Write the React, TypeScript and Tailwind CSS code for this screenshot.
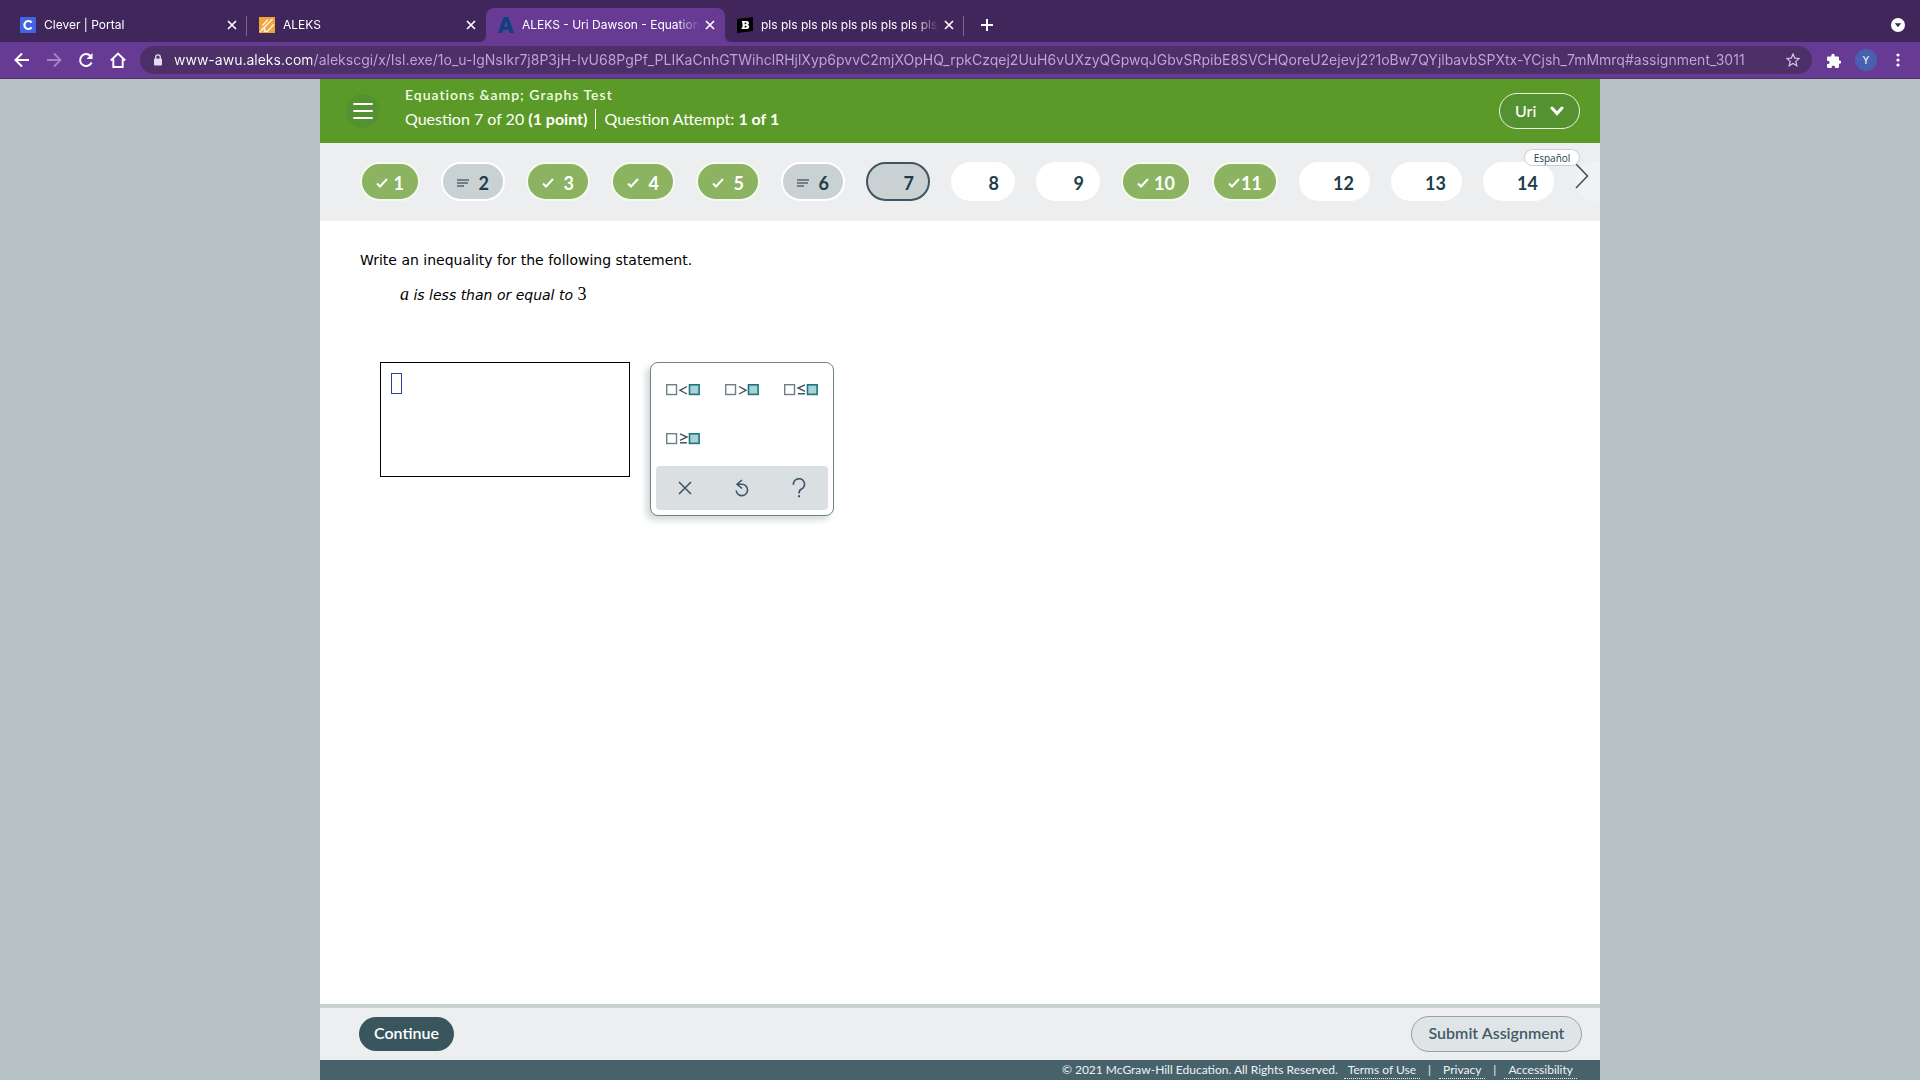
import React, { useState } from 'react';
import { clsx } from 'clsx';

type Status = 'answered' | 'partial' | 'current' | 'blank';

const questions: { n: number; status: Status; width: string }[] = [
  { n: 1, status: 'answered', width: 'w-[60px]' },
  { n: 2, status: 'partial', width: 'w-16' },
  { n: 3, status: 'answered', width: 'w-16' },
  { n: 4, status: 'answered', width: 'w-16' },
  { n: 5, status: 'answered', width: 'w-16' },
  { n: 6, status: 'partial', width: 'w-16' },
  { n: 7, status: 'current', width: 'w-16' },
  { n: 8, status: 'blank', width: 'w-16' },
  { n: 9, status: 'blank', width: 'w-16' },
  { n: 10, status: 'answered', width: 'w-[70px]' },
  { n: 11, status: 'answered', width: 'w-[66px]' },
  { n: 12, status: 'blank', width: 'w-[71px]' },
  { n: 13, status: 'blank', width: 'w-[71px]' },
  { n: 14, status: 'blank', width: 'w-[71px]' },
];

const host = 'www-awu.aleks.com';
const path =
  '/alekscgi/x/Isl.exe/1o_u-IgNsIkr7j8P3jH-lvU68PgPf_PLIKaCnhGTWihclRHjlXyp6pvvC2mjXOpHQ_rpkCzqej2UuH6vUXzyQGpwqJGbvSRpibE8SVCHQoreU2ejevj2?1oBw7QYjlbavbSPXtx-YCjsh_7mMmrq#assignment_3011';

function CloseIcon() {
  return (
    <svg width="10" height="10" viewBox="0 0 10 10" fill="none" stroke="#fff" strokeWidth="1.7">
      <path d="M1 1l8 8M9 1l-8 8" />
    </svg>
  );
}

function CleverIcon() {
  return (
    <svg width="16" height="16" viewBox="0 0 16 16">
      <rect width="16" height="16" rx="1" fill="#4264e3" />
      <path d="M11.6 5.6A4 4 0 1 0 11.6 10.4" fill="none" stroke="#fff" strokeWidth="2.2" />
    </svg>
  );
}

function PencilsIcon() {
  return (
    <svg width="16" height="16" viewBox="0 0 16 16">
      <rect width="16" height="16" fill="#f0a33c" />
      <path d="M1 15L13.500 2M3.500 8.500L9 2.500M2.500 11.500h3.200l-.2 2.800h3l6.500-7" fill="none" stroke="#fff3dc" strokeWidth="1.4" />
    </svg>
  );
}

function AleksIcon() {
  return (
    <svg width="16" height="16" viewBox="0 0 16 16">
      <path d="M0 16L5.700 0h4.600L16 16h-4.200l-1-3.200H5.200L4.200 16zM6.200 9.700h3.600L8 4z" fill="#0e417c" fillRule="evenodd" />
    </svg>
  );
}

function BrainlyIcon() {
  return (
    <svg width="16" height="16" viewBox="0 0 16 16">
      <path d="M0 2L16 0v14L0 16z" fill="#000" />
      <path d="M5 4h4.500c3 0 3 3.200 1.200 3.700 2.300.6 2 4.300-1.200 4.300H4.600v-1.600h.9V5.600H5zM7.700 5.600v1.600h1c1 0 1-1.600 0-1.600zM7.700 8.700v1.700h1.100c1.100 0 1.100-1.700 0-1.700z" fill="#fff" fillRule="evenodd" />
    </svg>
  );
}

const tabs = [
  { title: 'Clever | Portal', icon: CleverIcon, active: false, divider: true },
  { title: 'ALEKS', icon: PencilsIcon, active: false, divider: false },
  { title: 'ALEKS - Uri Dawson - Equation', icon: AleksIcon, active: true, divider: false },
  { title: 'pls pls pls pls pls pls pls pls pls', icon: BrainlyIcon, active: false, divider: true },
];

function TabStrip() {
  return (
    <div className="flex h-[42px] items-end bg-[#41265b] pl-2 pr-[15px]">
      {tabs.map((tab) => {
        const Icon = tab.icon;
        return (
          <div
            key={tab.title}
            className={clsx(
              'relative flex h-[34px] w-[239px] items-center rounded-t-lg pl-3 pr-[10px]',
              tab.active && 'bg-[#673a94]'
            )}
          >
            {tab.active && (
              <>
                <svg className="absolute -left-1.5 bottom-0" width="6" height="6" viewBox="0 0 6 6" fill="#673a94">
                  <path d="M6 0v6H0a6 6 0 0 0 6-6z" />
                </svg>
                <svg className="absolute -right-1.5 bottom-0" width="6" height="6" viewBox="0 0 6 6" fill="#673a94">
                  <path d="M0 0v6h6a6 6 0 0 1-6-6z" />
                </svg>
              </>
            )}
            <Icon />
            <span className="ml-2 flex-1 overflow-hidden whitespace-nowrap text-xs text-white [mask-image:linear-gradient(to_right,#000_154px,transparent_178px)]">
              {tab.title}
            </span>
            <button aria-label={`Close ${tab.title}`} className="ml-1.5">
              <CloseIcon />
            </button>
            {tab.divider && <span className="absolute right-0 top-2 h-5 w-px bg-[#7a6590]" />}
          </div>
        );
      })}
      <button aria-label="New tab" className="flex h-[34px] w-[46px] items-center justify-center">
        <svg width="12" height="12" viewBox="0 0 12 12" stroke="#fff" strokeWidth="2">
          <path d="M6 0v12M0 6h12" />
        </svg>
      </button>
      <button aria-label="Search tabs" className="ml-auto flex h-[34px] items-center">
        <svg width="14" height="14" viewBox="0 0 14 14">
          <circle cx="7" cy="7" r="7" fill="#fff" />
          <path d="M3.800 5.200h6.400L7 9.300z" fill="#41265b" />
        </svg>
      </button>
    </div>
  );
}

function Toolbar() {
  return (
    <div className="flex h-[37px] items-center border-b border-[#4c3566] bg-[#673a94] pl-[14px] pr-5">
      <div className="flex gap-4">
        <button aria-label="Back">
          <svg width="16" height="16" viewBox="0 0 16 16" fill="none" stroke="#fff" strokeWidth="2">
            <path d="M15 8H2M8 1.500L1.500 8 8 14.500" />
          </svg>
        </button>
        <button aria-label="Forward">
          <svg width="16" height="16" viewBox="0 0 16 16" fill="none" stroke="#a983c9" strokeWidth="1.800">
            <path d="M1 8h13M8 1.500L14.500 8 8 14.500" />
          </svg>
        </button>
        <button aria-label="Reload">
          <svg width="16" height="16" viewBox="0 0 16 16" fill="none" stroke="#fff" strokeWidth="2">
            <path d="M13.600 10.500A6 6 0 1 1 12.500 4" />
            <path d="M14.500 1v6h-6z" fill="#fff" stroke="none" />
          </svg>
        </button>
        <button aria-label="Home">
          <svg width="16" height="16" viewBox="0 0 16 16" fill="none" stroke="#fff" strokeWidth="1.900">
            <path d="M.8 8.500L8 1.500l7.200 7M3.300 7v8h9.400V7" />
          </svg>
        </button>
      </div>
      <div className="ml-[14px] flex h-7 flex-1 items-center rounded-full bg-[#4e3068] pl-[14px] pr-3">
        <svg width="8" height="12" viewBox="0 0 8 12">
          <rect y="4.500" width="8" height="7" rx="1" fill="#e6dcee" />
          <path d="M1.700 5V3.200a2.300 2.300 0 0 1 4.600 0V5" fill="none" stroke="#e6dcee" strokeWidth="1.300" />
        </svg>
        <input
          aria-label="Address"
          defaultValue={host + path}
          className="ml-3 h-[26px] min-w-0 flex-1 bg-[linear-gradient(to_right,#fff_138px,#c0a8d6_138px)] bg-clip-text pb-0.5 text-sm text-transparent outline-none"
        />
        <button aria-label="Bookmark">
          <svg width="14" height="14" viewBox="0 0 14 14" fill="none" stroke="#d5c6e2" strokeWidth="1.200">
            <path d="M7 1l1.700 4.100 4.400.4-3.300 2.900 1 4.300L7 10.400l-3.800 2.300 1-4.300L.9 5.500l4.400-.4z" />
          </svg>
        </button>
      </div>
      <div className="flex items-center pl-[15px]">
        <button aria-label="Extensions">
          <svg width="14" height="15" viewBox="0 0 14 15" fill="#fff">
            <path d="M1.300 3.500h3V2.400a1.700 1.700 0 0 1 3.400 0v1.100h3.100c.7 0 1.200.5 1.200 1.200v2.700h.5a1.700 1.700 0 0 1 0 3.400H12v3c0 .7-.5 1.200-1.200 1.200H8v-.8a1.700 1.700 0 0 0-3.400 0v.8H1.300C.6 15 0 14.500 0 13.800v-2.700h.9a1.700 1.700 0 0 0 0-3.400H0v-3c0-.7.6-1.200 1.300-1.200z" />
          </svg>
        </button>
        <button className="ml-[14px] h-[22px] w-[22px] rounded-full bg-[#4a5fb0] text-[10px] text-white">Y</button>
        <button aria-label="Menu" className="ml-[19px]">
          <svg width="4" height="14" viewBox="0 0 4 14" fill="#fff">
            <circle cx="2" cy="2" r="1.600" />
            <circle cx="2" cy="7" r="1.600" />
            <circle cx="2" cy="12" r="1.600" />
          </svg>
        </button>
      </div>
    </div>
  );
}

function Header() {
  return (
    <header className="flex h-16 items-center bg-[#5b9a28] pl-[26px] pr-5 text-white">
      <button aria-label="Open menu" className="flex h-[34px] w-[34px] items-center justify-center rounded-full bg-[#549231]">
        <svg width="20" height="16" viewBox="0 0 20 16" stroke="#fff" strokeWidth="1.800" strokeLinecap="round">
          <path d="M1 1h18M1 8h18M1 15h18" />
        </svg>
      </button>
      <div className="ml-[25px] pb-2">
        <h1 className="text-sm font-semibold leading-6 tracking-[1px] text-[#f0fae6]">Equations &amp;amp; Graphs Test</h1>
        <div className="flex items-center text-base leading-6">
          <span>
            Question 7 of 20 <b>(1 point)</b>
          </span>
          <span className="mx-2 h-5 w-px bg-white" />
          <span>
            Question Attempt: <b>1 of 1</b>
          </span>
        </div>
      </div>
      <button className="ml-auto flex h-9 w-[81px] items-center justify-between rounded-full border border-[#eaf6dc] bg-[#549231] px-[15px] text-base font-medium">
        Uri
        <svg width="14" height="10" viewBox="0 0 14 10" fill="none" stroke="#fff" strokeWidth="3" strokeLinecap="round">
          <path d="M2 2l5 5.500L12 2" />
        </svg>
      </button>
    </header>
  );
}

function QuestionNav({ current, onSelect }: { current: number; onSelect: (n: number) => void }) {
  return (
    <nav className="relative flex h-[78px] items-start gap-[21px] overflow-hidden bg-[#eceef0] pl-10 pt-[19px]">
      {questions.map((q) => (
        <button
          key={q.n}
          onClick={() => onSelect(q.n)}
          className={clsx(
            'flex h-[39px] shrink-0 items-center rounded-full border-2 px-[14px] pt-0.5 text-lg font-bold',
            q.width,
            q.status === 'answered' && 'justify-between border-[#f4fbec] bg-[#8bb362] text-white',
            q.status === 'partial' && 'justify-between border-white bg-[#c9d1d2] text-[#223c4a]',
            q.status === 'current' && 'justify-end bg-[#c9d1d2] text-[#223c4a]',
            q.status === 'blank' && 'justify-end border-white bg-white text-[#1f3d46]',
            q.status !== 'answered' && q.n === current && 'border-[#42545f]'
          )}
        >
          {q.status === 'answered' && (
            <svg width="12" height="10" viewBox="0 0 12 10" fill="none" stroke="#fff" strokeWidth="2" className="shrink-0">
              <path d="M1 5.500L4 8.500 11 1" />
            </svg>
          )}
          {q.status === 'partial' && (
            <svg width="12" height="8" viewBox="0 0 12 8" stroke="#52666e" strokeWidth="1.400">
              <path d="M0 1h12M0 4h11M0 7h7" />
            </svg>
          )}
          {q.n}
        </button>
      ))}
      <span className="h-[39px] flex-1 rounded-l-full bg-[#f0f2f4]" />
      <button
        aria-label="Next questions"
        className="absolute right-[11px] top-5"
      >
        <svg width="14" height="26" viewBox="0 0 14 26" fill="none" stroke="#42545f" strokeWidth="1.600">
          <path d="M1 1l11.500 12L1 25" />
        </svg>
      </button>
      <button className="absolute right-5 top-1.5 h-[17px] w-14 rounded-full border border-[#c9ced2] bg-white font-['Open_Sans',sans-serif] text-[10px] leading-4 text-[#223c4a]">
        Español
      </button>
    </nav>
  );
}

const relations = [
  { label: 'less than', d: 'M21 2.500L14 6.300l7 3.700' },
  { label: 'greater than', d: 'M14 2.500l7 3.800-7 3.700' },
  { label: 'less than or equal', d: 'M21 .8L14 4l7 3.300M14 9.800h7' },
  { label: 'greater than or equal', d: 'M14 .8L21 4l-7 3.300M14 9.800h7' },
];

function Palette() {
  return (
    <div className="flex w-[184px] flex-col rounded-lg border border-[#6f8289] bg-white px-[5px] pb-[5px] shadow-[-4px_4px_6px_rgba(130,145,150,0.35)]">
      <div className="grid grid-cols-[repeat(3,59px)] pb-[3px]">
        {relations.map((r) => (
          <button key={r.label} aria-label={r.label} className="flex h-[49px] items-center pl-[10px] pt-1">
            <svg width="34" height="12" viewBox="0 0 34 12" fill="none">
              <rect x=".7" y=".7" width="9.800" height="9.800" fill="#fff" stroke="#6f7f86" strokeWidth="1.400" />
              <path d={r.d} stroke="#42545f" strokeWidth="1.400" />
              <rect x="23.500" y=".8" width="9.600" height="9.600" fill="#a8d3d4" stroke="#1c7480" strokeWidth="1.600" />
            </svg>
          </button>
        ))}
      </div>
      <div className="mt-0.5 flex h-11 items-center justify-around rounded bg-[#dae0e2]">
        <button aria-label="Clear">
          <svg width="14" height="14" viewBox="0 0 14 14" stroke="#42566a" strokeWidth="1.600">
            <path d="M1 1l12 12M13 1L1 13" />
          </svg>
        </button>
        <button aria-label="Undo">
          <svg width="14" height="18" viewBox="0 0 14 18" fill="none" stroke="#42566a" strokeWidth="1.600">
            <path d="M1.200 11.500a5.700 5.700 0 1 0 5.700-6.300H2M7 1L2 5.200l5 4.300" />
          </svg>
        </button>
        <button aria-label="Help">
          <svg width="14" height="20" viewBox="0 0 14 20" fill="none" stroke="#42566a" strokeWidth="1.700">
            <path d="M1.500 6.800a5.500 5.500 0 1 1 8 4.300C7.600 12 7 12.800 7 15.500" />
            <path d="M7 17.300v1.900" strokeWidth="2" />
          </svg>
        </button>
      </div>
    </div>
  );
}

function Question() {
  return (
    <main className="flex-1 bg-white pl-10 pt-[29px] font-['DejaVu_Sans',sans-serif] text-sm text-black">
      <p className="leading-5">Write an inequality for the following statement.</p>
      <p className="pl-10 pt-[14px] italic leading-5">
        <span className="font-['Liberation_Serif',serif] text-lg leading-5">a</span> is less than or equal to{' '}
        <span className="font-['Liberation_Serif',serif] text-lg not-italic leading-5">3</span>
      </p>
      <div className="flex items-start gap-5 pl-5 pt-[57px]">
        <div className="h-[115px] w-[250px] border border-black p-[10px]">
          <input aria-label="Answer" className="block h-[21px] w-[11px] border border-[#2f3f96] outline-none" />
        </div>
        <Palette />
      </div>
    </main>
  );
}

function Footer() {
  return (
    <>
      <div className="flex h-14 items-center justify-between border-t-4 border-[#c9d1d1] bg-[#eceef0] pl-[39px] pr-[18px] text-base font-semibold">
        <button className="h-[34px] w-[95px] rounded-full bg-[#39555d] pb-0.5 text-white">Continue</button>
        <button className="h-9 w-[171px] rounded-full border border-[#94a1a5] bg-[#dfe5e6] pb-0.5 text-[#445a68]">
          Submit Assignment
        </button>
      </div>
      <footer className="flex h-5 items-center justify-end bg-[#48626b] pr-[23px] text-xs text-[#edf4f5]">
        <span className="pr-1.5">© 2021 McGraw-Hill Education. All Rights Reserved.</span>
        <a href="#terms" className="border-b border-dotted px-1 leading-4">Terms of Use</a>
        <span className="px-2">|</span>
        <a href="#privacy" className="border-b border-dotted px-1 leading-4">Privacy</a>
        <span className="px-2">|</span>
        <a href="#accessibility" className="border-b border-dotted px-1 leading-4">Accessibility</a>
      </footer>
    </>
  );
}

export default function App() {
  const [current, setCurrent] = useState(7);

  return (
    <div className="flex min-h-screen flex-col bg-[#b7c3c5]">
      {/* Browser chrome */}
      <div className="font-['Inter',sans-serif]">
        <TabStrip />
        <Toolbar />
      </div>

      {/* Assignment page */}
      <div className="mx-auto flex w-full max-w-[1280px] flex-1 flex-col font-['Lato',sans-serif]">
        <Header />
        <QuestionNav current={current} onSelect={setCurrent} />
        <Question />
        <Footer />
      </div>
    </div>
  );
}
